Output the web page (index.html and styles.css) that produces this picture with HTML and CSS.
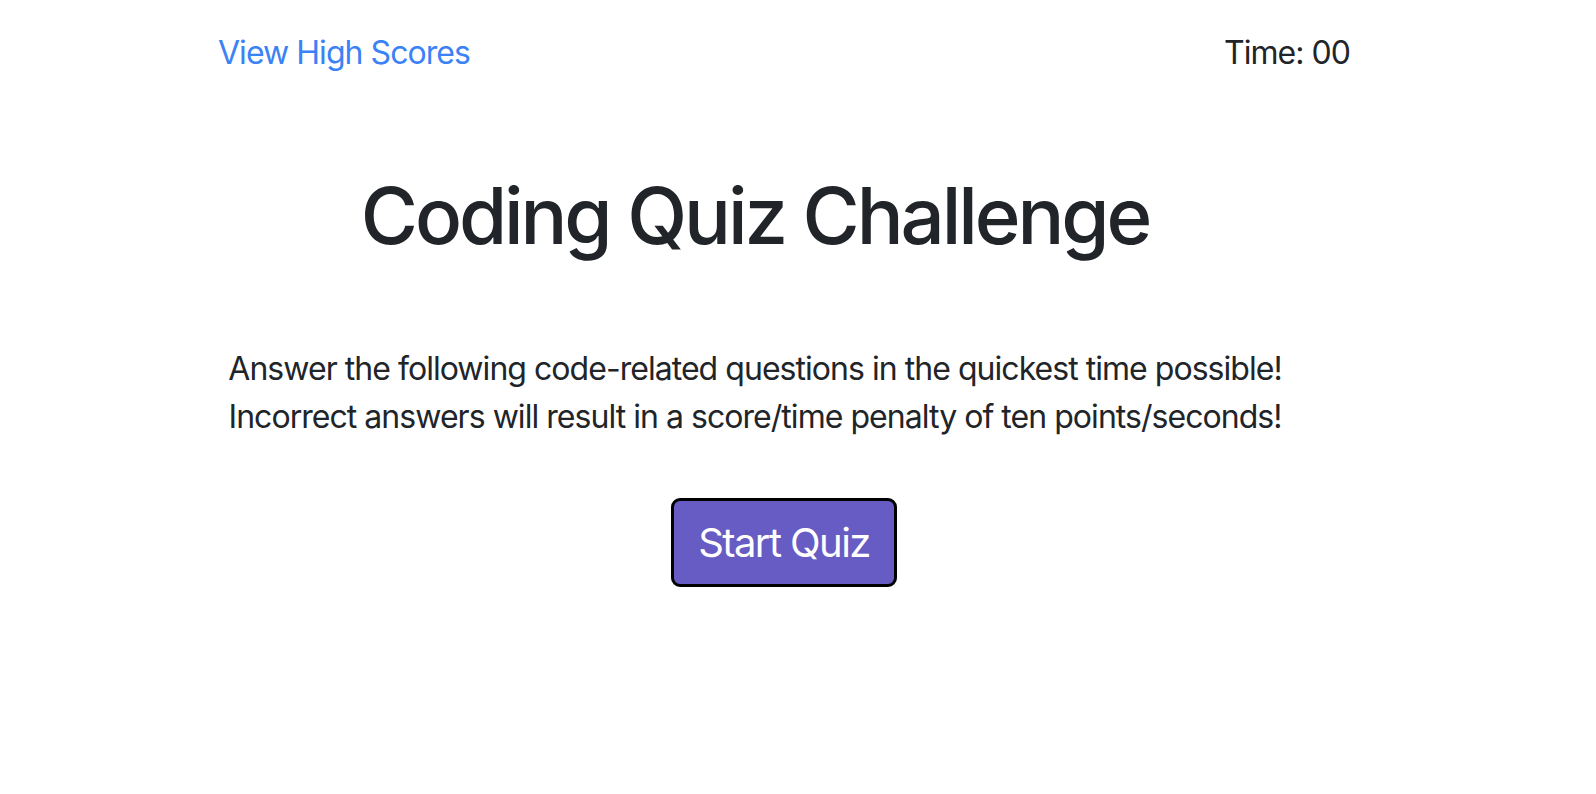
FILE: index.html
```html
<!DOCTYPE html>
<html lang="en">
<head>
<meta charset="utf-8">
<title>Coding Quiz Challenge</title>
<link rel="stylesheet" href="styles.css">
</head>
<body>
<div class="page">
  <header class="topbar">
    <a class="scores-link" href="#">View High Scores</a>
    <div class="timer">Time: <span>00</span></div>
  </header>
  <main class="intro">
    <h1 class="title">Coding Quiz Challenge</h1>
    <p class="lead">Answer the following code-related questions in the quickest time possible!<br>Incorrect answers will result in a score/time penalty of ten points/seconds!</p>
    <div class="actions">
      <button class="start-btn" type="button">Start Quiz</button>
    </div>
  </main>
</div>
</body>
</html>
```
FILE: styles.css
```css
* { box-sizing: border-box; }
html, body { margin: 0; padding: 0; background: #fff; }
body {
  font-family: Inter, "Noto Sans", "Liberation Sans", sans-serif;
  color: #212529;
  font-size: 32px;
  line-height: 1.5;
  letter-spacing: -0.03em;
}
.page {
  width: 1132px;
  margin-left: 218px;
}
.topbar {
  display: flex;
  justify-content: space-between;
  align-items: baseline;
  padding-top: 29px;
}
.scores-link {
  color: #3b82f6;
  text-decoration: none;
}
.timer { color: #212529; }
.intro {
  display: flex;
  flex-direction: column;
  align-items: center;
}
.title {
  font-size: 78px;
  font-weight: 500;
  line-height: 1.2;
  letter-spacing: -0.04em;
  margin: 92px 58px 0 0;
}
.lead {
  text-align: center;
  white-space: nowrap;
  line-height: 48px;
  margin: 82px 58px 0 0;
}
.actions {
  margin-top: 57px;
}
.start-btn {
  font-family: inherit;
  font-size: 40px;
  line-height: 59px;
  letter-spacing: -0.04em;
  color: #fff;
  background: #675bc4;
  border: 3px solid #000;
  border-radius: 9px;
  padding: 12px 24px;
  cursor: pointer;
}
```
